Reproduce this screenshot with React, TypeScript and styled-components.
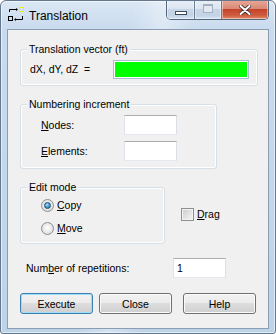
import React from "react";
import styled, { createGlobalStyle } from "styled-components";

const Global = createGlobalStyle`
  html, body { margin: 0; padding: 0; background: #ffffff; }
  body { font-family: "Liberation Sans", Arial, sans-serif; }
`;

const Window = styled.div`
  width: 276px;
  height: 334px;
  box-sizing: border-box;
  border: 1px solid #66788d;
  border-radius: 6px 6px 3px 3px;
  padding: 0 6px 4px 6px;
  display: flex;
  flex-direction: column;
  background:
    linear-gradient(100deg, rgba(255,255,255,0) 40%, rgba(255,255,255,0.35) 50%, rgba(255,255,255,0) 60%),
    linear-gradient(to bottom, #dbe7f4 0px, #c9dbee 28px, #bdd3ea 100%);
  box-shadow: inset 0 0 0 1px rgba(255, 255, 255, 0.55);
  overflow: hidden;
`;

const TitleBar = styled.div`
  height: 28px;
  display: flex;
  align-items: flex-start;
  flex-shrink: 0;
`;

const TitleIcon = styled.svg`
  margin: 6px 0 0 1px;
  flex-shrink: 0;
`;

const Title = styled.div`
  margin: 7px 0 0 5px;
  font-family: "Liberation Sans", Arial, sans-serif;
  font-size: 12px;
  line-height: 16px;
  color: #000;
  flex: 1;
`;

const Controls = styled.div`
  margin-top: -1px;
  margin-right: 0;
  display: flex;
  height: 19px;
  border: 1px solid #57677b;
  border-top: none;
  border-radius: 0 0 5px 5px;
  overflow: hidden;
`;

const CtrlBtn = styled.div<{ $kind: "min" | "max" | "close" }>`
  box-sizing: border-box;
  width: ${(p) => (p.$kind === "close" ? "47px" : "27px")};
  height: 19px;
  display: flex;
  align-items: center;
  justify-content: center;
  border-left: ${(p) => (p.$kind === "min" ? "none" : "1px solid #6d7d90")};
  box-shadow: inset 0 0 0 1px rgba(255, 255, 255, 0.45);
  background: ${(p) =>
    p.$kind === "close"
      ? "linear-gradient(to bottom, #e9a899 0%, #d98a78 45%, #c5432b 50%, #cf5b3f 80%, #e08a66 100%)"
      : "linear-gradient(to bottom, #e9eff7 0%, #dbe5f1 45%, #c7d5e6 50%, #c3d3e6 80%, #d5e3f2 100%)"};
`;

const MinGlyph = styled.span`
  width: 10px;
  height: 2px;
  margin-top: 7px;
  background: #ffffff;
  border: 1px solid #3c4a5c;
`;

const MaxGlyph = styled.span`
  width: 8px;
  height: 6px;
  margin-top: -2px;
  border: 1px solid #a3b0bf;
  border-top-width: 2px;
  background: #e3e9f1;
`;

const Client = styled.div`
  flex: 1;
  box-sizing: border-box;
  border: 1px solid #8c9db1;
  background: #f0f0f0;
  display: flex;
  flex-direction: column;
  font-family: "Liberation Sans", Arial, sans-serif;
  font-size: 10.5px;
  color: #000;
`;

const GroupBox = styled.div<{ $w: number; $mt: number }>`
  position: relative;
  box-sizing: border-box;
  width: ${(p) => p.$w}px;
  margin-top: ${(p) => p.$mt}px;
  border: 1px solid #d5dfe5;
  border-radius: 3px;
  box-shadow: inset 0 0 0 1px #ffffff;
`;

const Caption = styled.span`
  position: absolute;
  top: -7px;
  left: 6px;
  padding: 0 2px;
  background: #f0f0f0;
  line-height: 13px;
  white-space: nowrap;
`;

const VectorBody = styled.div`
  display: flex;
  align-items: center;
  padding: 10px 8px 6px 9px;
`;

const Label = styled.span`
  white-space: pre;
  line-height: 13px;
`;

const U = styled.span`
  text-decoration: underline;
  text-underline-offset: 1px;
`;

const TextBox = styled.div<{ $w: number; $h: number; $green?: boolean }>`
  box-sizing: border-box;
  width: ${(p) => p.$w}px;
  height: ${(p) => p.$h}px;
  background: ${(p) => (p.$green ? "#00ff00" : "#ffffff")};
  border: 1px solid;
  border-color: ${(p) =>
    p.$green ? "#a9bcd2" : "#abadb3 #dbdfe6 #e3e9ef #e2e3ea"};
  box-shadow: ${(p) => (p.$green ? "inset 0 0 0 1px #ffffff" : "none")};
  padding-left: 3px;
  display: flex;
  align-items: center;
  line-height: 13px;
`;

const VectorInput = styled(TextBox)`
  margin-left: auto;
`;

const FieldGrid = styled.div<{ $col: number }>`
  display: grid;
  grid-template-columns: ${(p) => p.$col}px 53px;
  align-items: center;
  row-gap: 6px;
`;

const NumberingBody = styled(FieldGrid)`
  padding: 10px 0 7px 20px;
`;

const EditRow = styled.div`
  display: flex;
  align-items: center;
  margin-left: 12px;
  margin-top: 18px;
`;

const EditBody = styled.div`
  display: flex;
  flex-direction: column;
  gap: 10px;
  padding: 11px 0 8px 20px;
`;

const Option = styled.label`
  display: flex;
  align-items: center;
  gap: 3px;
  height: 13px;
  line-height: 13px;
`;

const RadioCircle = styled.span<{ $checked?: boolean }>`
  box-sizing: border-box;
  width: 13px;
  height: 13px;
  border-radius: 50%;
  border: 1px solid #8e8f8f;
  background: radial-gradient(circle at 50% 45%, #ffffff 0%, #eeeeee 40%, #cfcfcf 100%);
  display: flex;
  align-items: center;
  justify-content: center;
  flex-shrink: 0;

  &::after {
    content: "";
    display: ${(p) => (p.$checked ? "block" : "none")};
    box-sizing: border-box;
    width: 7px;
    height: 7px;
    border-radius: 50%;
    border: 1px solid #1b4f75;
    background: radial-gradient(circle at 40% 35%, #b5e2fb 0%, #4aa0d8 45%, #1b6ea8 100%);
  }
`;

const CheckBox = styled.span`
  box-sizing: border-box;
  width: 13px;
  height: 13px;
  border: 1px solid #8e8f8f;
  box-shadow: inset 0 0 0 1px #f4f4f4;
  background: linear-gradient(135deg, #cbcbcb 0%, #e6e6e6 60%, #f6f6f6 100%);
  flex-shrink: 0;
`;

const DragOption = styled(Option)`
  margin-left: 16px;
  margin-top: -2px;
`;

const RepRow = styled(FieldGrid)`
  margin: 14px 0 0 18px;
`;

const ButtonRow = styled.div`
  display: flex;
  margin: 15px 0 0 12px;
`;

const Btn = styled.button<{ $default?: boolean; $gap: number }>`
  box-sizing: border-box;
  width: 73px;
  height: 21px;
  margin-left: ${(p) => p.$gap}px;
  padding: 0;
  border: 1px solid ${(p) => (p.$default ? "#3c7fb1" : "#707070")};
  border-radius: 3px;
  box-shadow: inset 0 0 0 1px ${(p) => (p.$default ? "#9fdcf7" : "#fbfbfb")};
  background: linear-gradient(to bottom, #f2f2f2 0%, #ebebeb 50%, #dddddd 50%, #cfcfcf 100%);
  font-family: "Liberation Sans", Arial, sans-serif;
  font-size: 10.5px;
  color: #000;
`;

function AppIcon() {
  return (
    <TitleIcon width="16" height="16" viewBox="0 0 16 16">
      <rect x="11.5" y="0.5" width="4" height="4" fill="none" stroke="#f2f200" />
      <rect x="0.5" y="9.5" width="4" height="4" fill="none" stroke="#000" />
      <path d="M1.5 5V2.5H9" stroke="#000" fill="none" />
      <path d="M8 1L10 2.5L8 4Z" fill="#000" />
      <path d="M14.5 9V12.5H8" stroke="#000" fill="none" />
      <path d="M8 11L6 12.5L8 14Z" fill="#000" />
    </TitleIcon>
  );
}

export default function App() {
  return (
    <>
      <Global />
      <Window>
        <TitleBar>
          <AppIcon />
          <Title>Translation</Title>
          <Controls>
            <CtrlBtn $kind="min">
              <MinGlyph />
            </CtrlBtn>
            <CtrlBtn $kind="max">
              <MaxGlyph />
            </CtrlBtn>
            <CtrlBtn $kind="close">
              <svg width="12" height="10" viewBox="0 0 12 10">
                <path
                  d="M1.5 1L10.5 9M10.5 1L1.5 9"
                  stroke="#3a2a28"
                  strokeWidth="3.6"
                  strokeLinecap="round"
                />
                <path
                  d="M1.5 1L10.5 9M10.5 1L1.5 9"
                  stroke="#ffffff"
                  strokeWidth="2"
                  strokeLinecap="round"
                />
              </svg>
            </CtrlBtn>
          </Controls>
        </TitleBar>
        <Client>
          <GroupBox $w={238} $mt={19} style={{ marginLeft: 12 }}>
            <Caption>Translation vector (ft)</Caption>
            <VectorBody>
              <Label>{"dX, dY, dZ  ="}</Label>
              <VectorInput $w={136} $h={19} $green />
            </VectorBody>
          </GroupBox>

          <GroupBox $w={197} $mt={18} style={{ marginLeft: 12 }}>
            <Caption>Numbering increment</Caption>
            <NumberingBody $col={83}>
              <Label>
                <U>N</U>odes:
              </Label>
              <TextBox $w={53} $h={20} />
              <Label>
                <U>E</U>lements:
              </Label>
              <TextBox $w={53} $h={20} />
            </NumberingBody>
          </GroupBox>

          <EditRow>
            <GroupBox $w={145} $mt={0}>
              <Caption>Edit mode</Caption>
              <EditBody>
                <Option>
                  <RadioCircle $checked />
                  <span>
                    <U>C</U>opy
                  </span>
                </Option>
                <Option>
                  <RadioCircle />
                  <span>
                    <U>M</U>ove
                  </span>
                </Option>
              </EditBody>
            </GroupBox>
            <DragOption>
              <CheckBox />
              <span>
                <U>D</U>rag
              </span>
            </DragOption>
          </EditRow>

          <RepRow $col={147}>
            <Label>
              Num<U>b</U>er of repetitions:
            </Label>
            <TextBox $w={53} $h={20}>
              1
            </TextBox>
          </RepRow>

          <ButtonRow>
            <Btn $default $gap={0}>
              Execute
            </Btn>
            <Btn $gap={6}>Close</Btn>
            <Btn $gap={11}>Help</Btn>
          </ButtonRow>
        </Client>
      </Window>
    </>
  );
}
